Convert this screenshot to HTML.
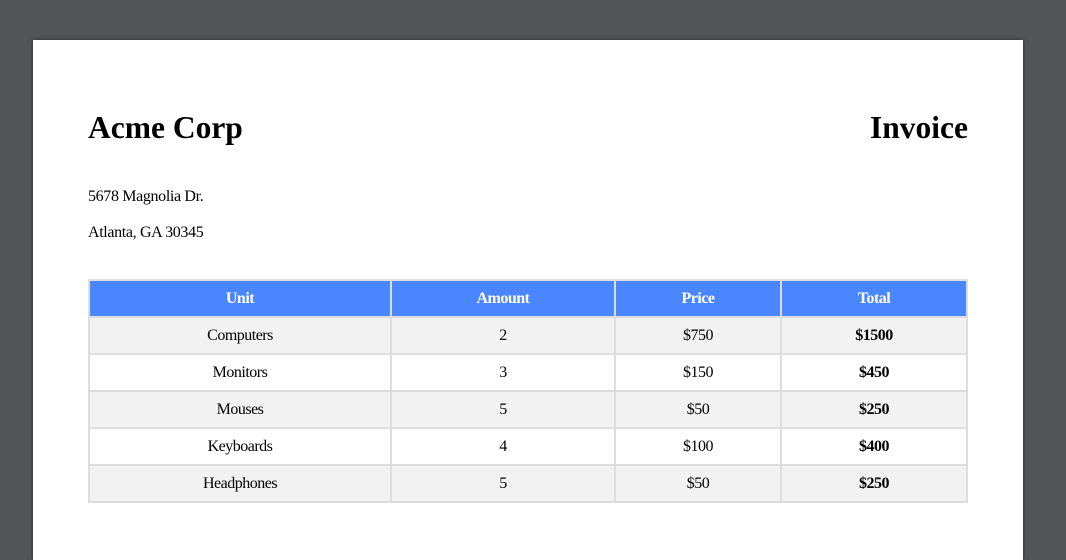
<!DOCTYPE html>
<html><head><style>
body{margin:0;width:1066px;height:550px;background:#525659;overflow:hidden;font-family:"Liberation Serif",serif;}
.page{position:absolute;left:33px;top:40px;width:990px;height:520px;background:#fff;box-shadow:0 0 4px rgba(0,0,0,.5);}
h1{position:absolute;margin:0;font-size:31.5px;font-weight:bold;top:69px;line-height:38px;}
p{position:absolute;margin:0;left:55px;font-size:16px;letter-spacing:-0.35px;line-height:20px;}
table{position:absolute;left:55px;top:239px;width:880px;border-collapse:collapse;font-size:16px;letter-spacing:-0.5px;}
td,th{border:2px solid #ddd;height:35px;padding:0;text-align:center;}
th{background:#4a86ff;color:#fff;}
tr:nth-child(even) td{background:#f2f2f2;}
td:last-child{font-weight:bold;}
</style></head><body>
<div class="page">
<h1 style="left:55px">Acme Corp</h1>
<h1 style="right:55px">Invoice</h1>
<p style="top:147px">5678 Magnolia Dr.</p>
<p style="top:183px">Atlanta, GA 30345</p>
<table>
<tr><th style="width:300px">Unit</th><th style="width:222px">Amount</th><th style="width:164px">Price</th><th>Total</th></tr>
<tr><td>Computers</td><td>2</td><td>$750</td><td>$1500</td></tr>
<tr><td>Monitors</td><td>3</td><td>$150</td><td>$450</td></tr>
<tr><td>Mouses</td><td>5</td><td>$50</td><td>$250</td></tr>
<tr><td>Keyboards</td><td>4</td><td>$100</td><td>$400</td></tr>
<tr><td>Headphones</td><td>5</td><td>$50</td><td>$250</td></tr>
</table>
</div>
</body></html>
